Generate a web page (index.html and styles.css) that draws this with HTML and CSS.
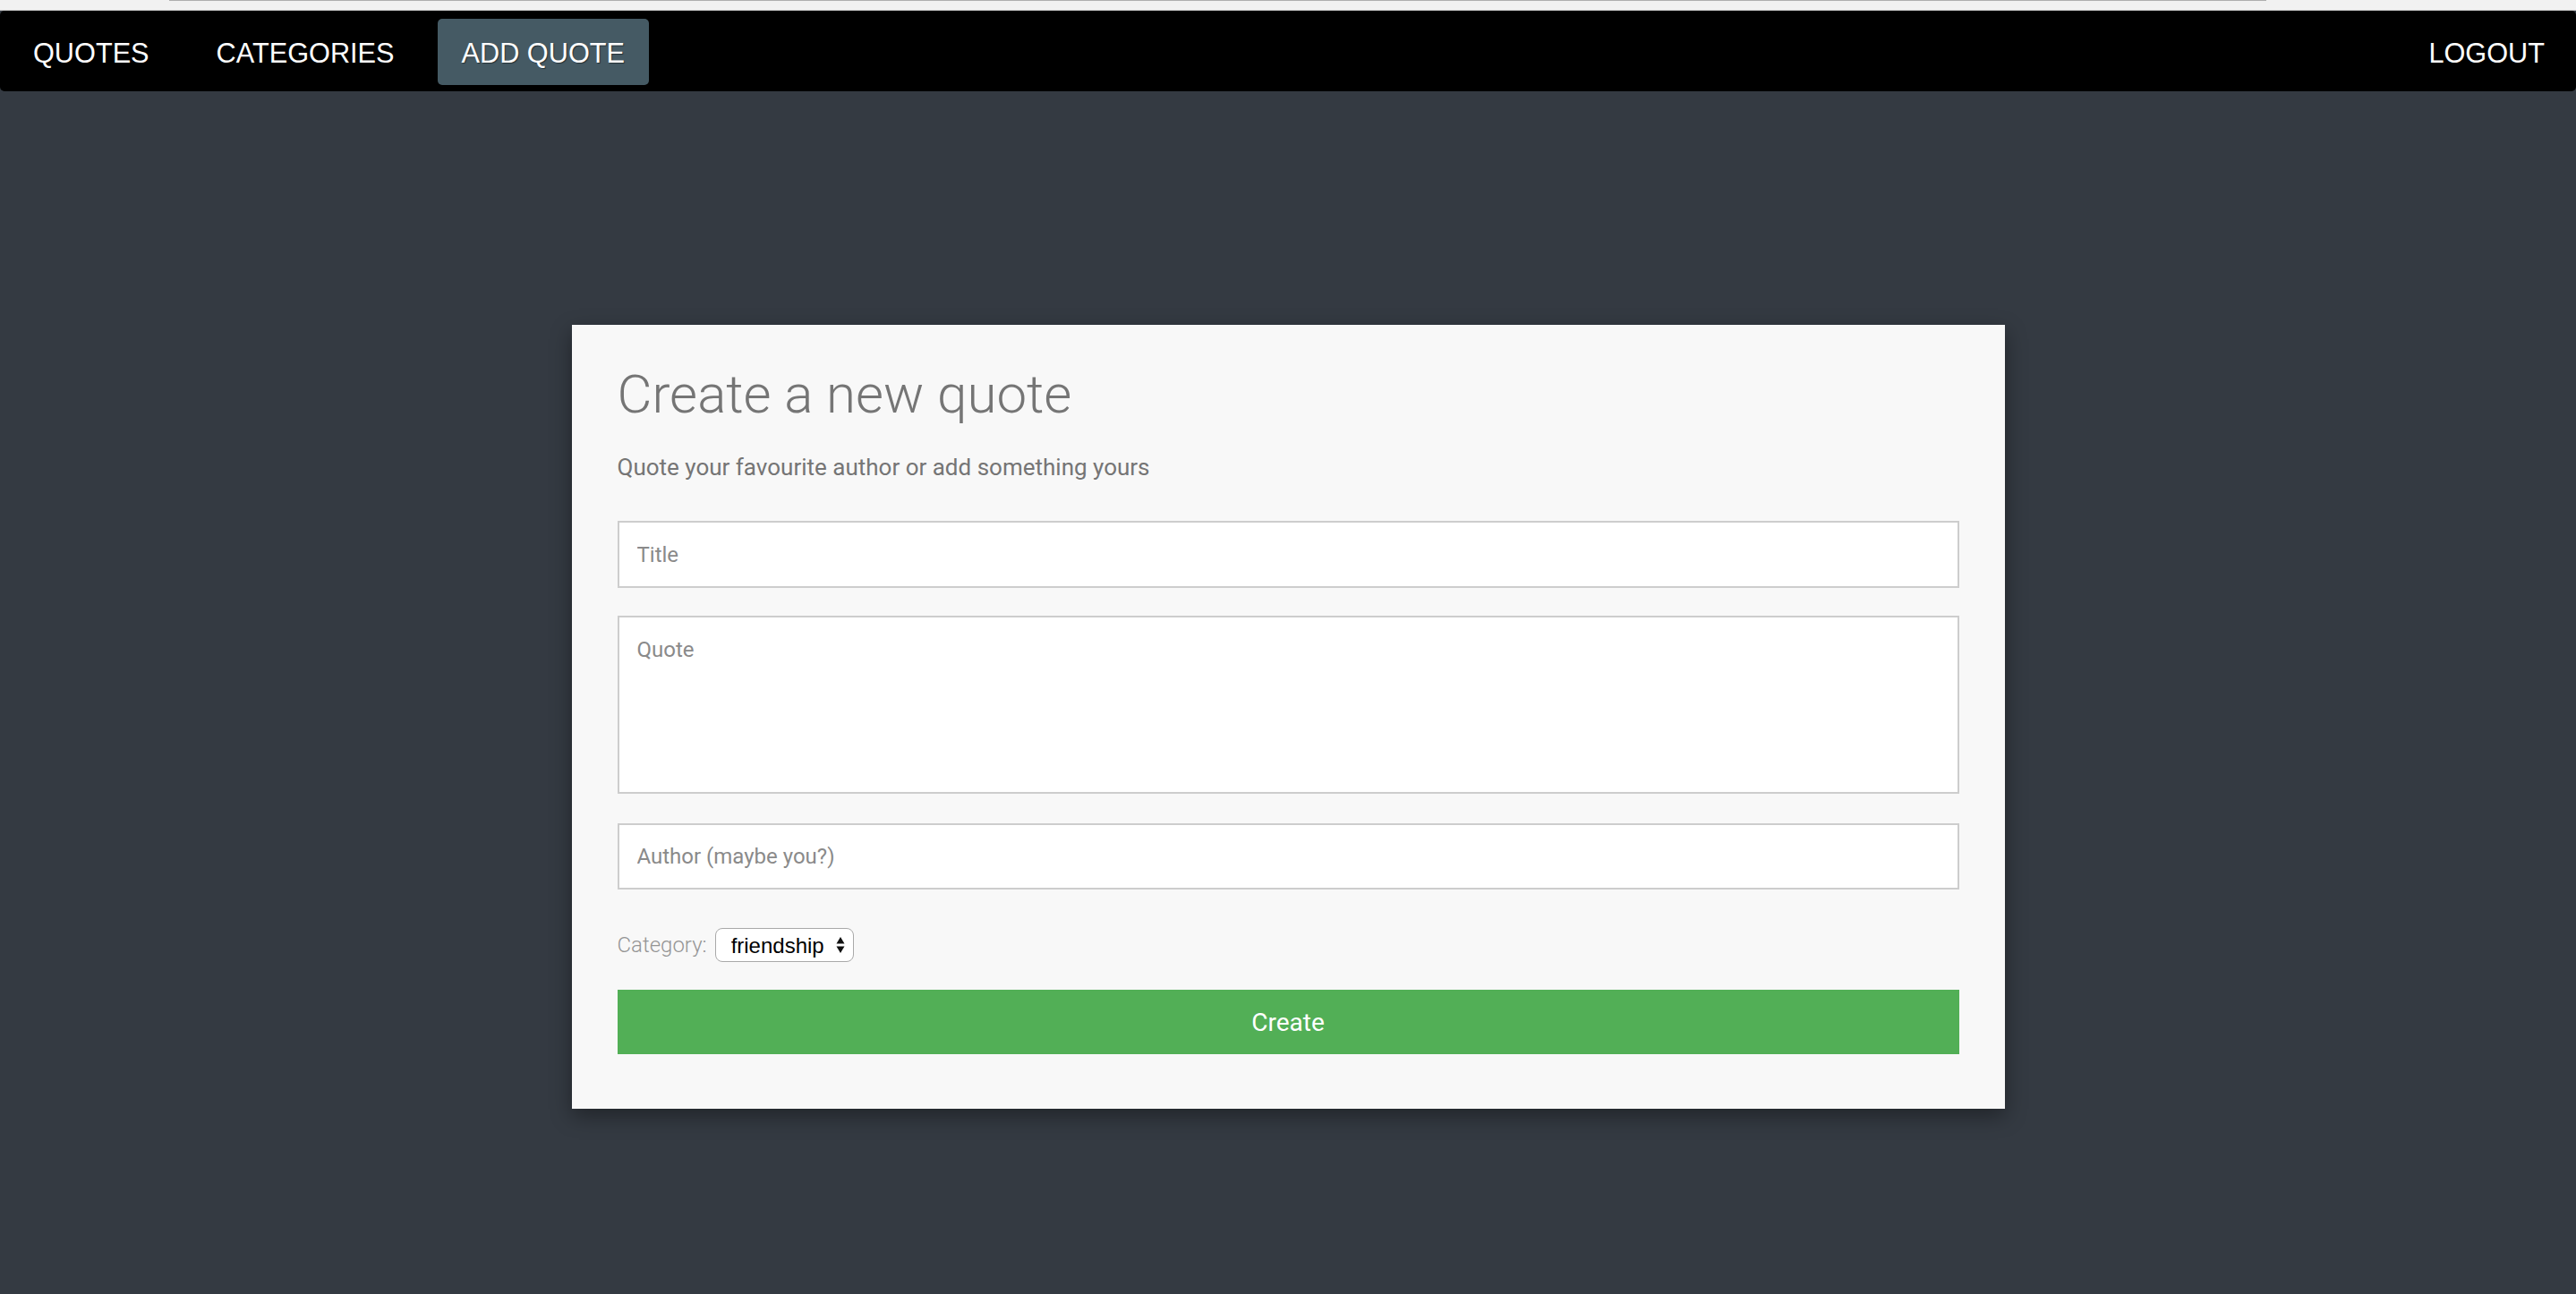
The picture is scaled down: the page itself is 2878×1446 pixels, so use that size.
FILE: index.html
```html
<!DOCTYPE html>
<html lang="en">
<head>
<meta charset="utf-8">
<title>Add quote</title>
<link rel="stylesheet" href="styles.css">
</head>
<body>
<div class="topstrip"><div class="track"></div></div>
<nav class="navbar">
  <div class="nav-left">
    <a class="nav-item" href="#">QUOTES</a>
    <a class="nav-item" href="#">CATEGORIES</a>
    <a class="nav-item active" href="#">ADD QUOTE</a>
  </div>
  <a class="nav-item" href="#">LOGOUT</a>
</nav>
<main class="main">
  <form class="card">
    <h1 class="card-title">Create a new quote</h1>
    <p class="card-sub">Quote your favourite author or add something yours</p>
    <input class="field field-title" type="text" placeholder="Title">
    <textarea class="field field-quote" placeholder="Quote"></textarea>
    <input class="field field-author" type="text" placeholder="Author (maybe you?)">
    <div class="category-row">
      <label class="category-label" for="cat">Category:</label>
      <div class="select-box">
        <select id="cat" class="select">
          <option>friendship</option>
          <option>life</option>
          <option>love</option>
        </select>
        <svg class="select-arrows" width="10" height="20" viewBox="0 0 10 20" aria-hidden="true">
          <path d="M5 1 L9.5 8.5 L0.5 8.5 Z" fill="#111"/>
          <path d="M5 19 L9.5 11.5 L0.5 11.5 Z" fill="#111"/>
        </svg>
      </div>
    </div>
    <button class="create-btn" type="button">Create</button>
  </form>
</main>
</body>
</html>
```

FILE: styles.css
```css
html, body {
  margin: 0;
  padding: 0;
}

body {
  background: #343a42;
  min-height: 1446px;
  font-family: Roboto, "Liberation Sans", sans-serif;
}

.topstrip {
  height: 11px;
  background: #f1f1f1;
  border-bottom: 1px solid #c4c4c4;
  display: flex;
}

.track {
  margin-left: 189px;
  width: 2343px;
  height: 0;
  border-top: 1px solid #aeaeae;
}

.navbar {
  height: 90px;
  background: #000;
  border-radius: 5px;
  display: flex;
  align-items: center;
  justify-content: space-between;
  padding: 0 8px 0 10px;
}

.nav-left {
  display: flex;
  align-items: center;
  gap: 21px;
}

.nav-item {
  display: block;
  height: 74px;
  line-height: 77px;
  overflow: hidden;
  margin-top: 2px;
  padding: 0 27px;
  font-family: "Liberation Sans", Arial, sans-serif;
  font-size: 30.7px;
  color: #fff;
  text-decoration: none;
  border-radius: 5px;
  text-shadow: 1px 1px 1px rgba(0, 0, 0, 0.45);
}

.nav-item.active {
  background: #455a64;
}

.main {
  display: flex;
  justify-content: center;
  padding-top: 261px;
}

.card {
  width: 1601px;
  box-sizing: border-box;
  background: #f8f8f8;
  padding: 42px 51px 61px;
  box-shadow: 0 8px 22px rgba(0, 0, 0, 0.38);
  display: flex;
  flex-direction: column;
}

.card-title {
  margin: 0;
  font-family: Roboto, sans-serif;
  font-weight: 300;
  font-size: 60px;
  line-height: 72px;
  color: #757575;
}

.card-sub {
  margin: 26px 0 41px;
  font-family: Roboto, sans-serif;
  font-weight: 400;
  font-size: 26px;
  line-height: 38px;
  color: #757575;
}

.field {
  display: block;
  box-sizing: border-box;
  width: 100%;
  margin: 0;
  border: 2px solid #cdcdcd;
  border-radius: 0;
  background: #fff;
  font-family: Roboto, sans-serif;
  font-size: 24px;
  color: #333;
  padding: 0 20px;
  outline: none;
}

.field::placeholder {
  color: #8a8a8a;
  opacity: 1;
}

.field-title {
  height: 75px;
  margin-bottom: 31px;
}

.field-quote {
  height: 199px;
  padding-top: 21px;
  line-height: 30px;
  resize: none;
  margin-bottom: 33px;
}

.field-author {
  height: 74px;
  margin-bottom: 43px;
}

.category-row {
  display: flex;
  align-items: center;
  gap: 9px;
  margin-bottom: 31px;
}

.category-label {
  font-family: Roboto, sans-serif;
  font-weight: 300;
  font-size: 24px;
  color: #959595;
}

.select-box {
  display: flex;
  align-items: center;
  box-sizing: border-box;
  width: 155px;
  height: 38px;
  background: #fff;
  border: 1.5px solid #a9a9a9;
  border-radius: 8px;
  padding: 0 9px 0 17px;
}

.select {
  appearance: none;
  -webkit-appearance: none;
  border: none;
  background: transparent;
  padding: 0;
  margin: 0;
  font-family: "Liberation Sans", Arial, sans-serif;
  font-size: 24px;
  color: #000;
  flex: 1;
  min-width: 0;
  outline: none;
}

.select-arrows {
  flex: none;
}

.create-btn {
  display: block;
  width: 100%;
  height: 72px;
  border: none;
  border-radius: 0;
  background: #52af56;
  color: #fff;
  font-family: Roboto, sans-serif;
  font-size: 28px;
  cursor: pointer;
}
```
